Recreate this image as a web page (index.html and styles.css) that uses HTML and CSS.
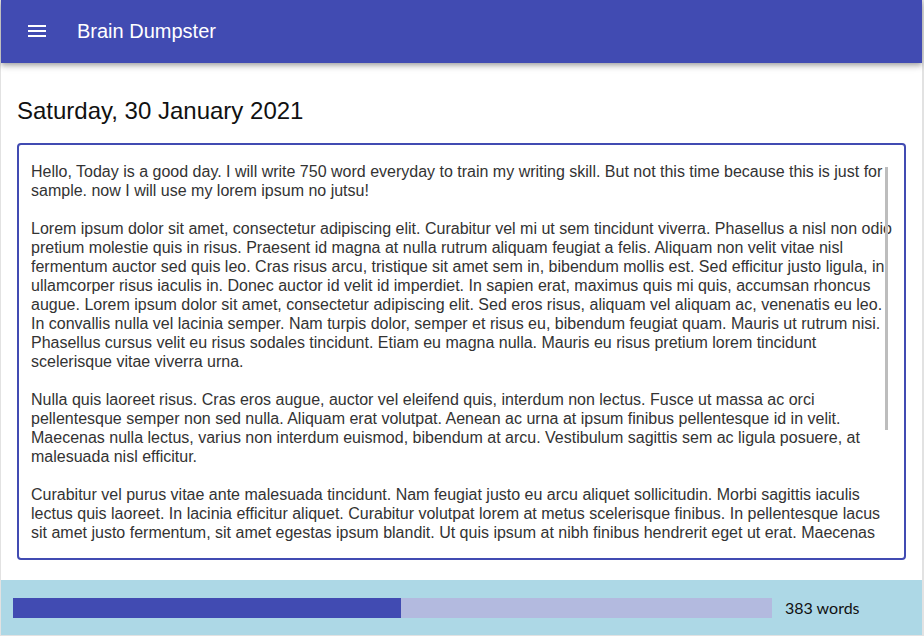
FILE: index.html
```html
<!DOCTYPE html>
<html lang="en">
<head>
<meta charset="utf-8">
<title>Brain Dumpster</title>
<link rel="stylesheet" href="styles.css">
</head>
<body>
<div class="frame">
  <header class="appbar">
    <button class="menu-btn" aria-label="Menu">
      <svg viewBox="0 0 24 24" width="24" height="24"><path fill="#fff" d="M3 18h18v-2H3v2zm0-5h18v-2H3v2zm0-7v2h18V6H3z"/></svg>
    </button>
    <div class="title">Brain Dumpster</div>
  </header>
  <main class="main">
    <h1 class="date">Saturday, 30 January 2021</h1>
    <div class="editor">
      <textarea class="editor-text" spellcheck="false">Hello, Today is a good day. I will write 750 word everyday to train my writing skill. But not this time because this is just for sample. now I will use my lorem ipsum no jutsu!

Lorem ipsum dolor sit amet, consectetur adipiscing elit. Curabitur vel mi ut sem tincidunt viverra. Phasellus a nisl non odio pretium molestie quis in risus. Praesent id magna at nulla rutrum aliquam feugiat a felis. Aliquam non velit vitae nisl fermentum auctor sed quis leo. Cras risus arcu, tristique sit amet sem in, bibendum mollis est. Sed efficitur justo ligula, in ullamcorper risus iaculis in. Donec auctor id velit id imperdiet. In sapien erat, maximus quis mi quis, accumsan rhoncus augue. Lorem ipsum dolor sit amet, consectetur adipiscing elit. Sed eros risus, aliquam vel aliquam ac, venenatis eu leo. In convallis nulla vel lacinia semper. Nam turpis dolor, semper et risus eu, bibendum feugiat quam. Mauris ut rutrum nisi. Phasellus cursus velit eu risus sodales tincidunt. Etiam eu magna nulla. Mauris eu risus pretium lorem tincidunt scelerisque vitae viverra urna.

Nulla quis laoreet risus. Cras eros augue, auctor vel eleifend quis, interdum non lectus. Fusce ut massa ac orci pellentesque semper non sed nulla. Aliquam erat volutpat. Aenean ac urna at ipsum finibus pellentesque id in velit. Maecenas nulla lectus, varius non interdum euismod, bibendum at arcu. Vestibulum sagittis sem ac ligula posuere, at malesuada nisl efficitur.

Curabitur vel purus vitae ante malesuada tincidunt. Nam feugiat justo eu arcu aliquet sollicitudin. Morbi sagittis iaculis lectus quis laoreet. In lacinia efficitur aliquet. Curabitur volutpat lorem at metus scelerisque finibus. In pellentesque lacus sit amet justo fermentum, sit amet egestas ipsum blandit. Ut quis ipsum at nibh finibus hendrerit eget ut erat. Maecenas sed tortor at nisi tincidunt luctus. Integer vitae lorem non ante porta vulputate. Donec gravida, nunc a pulvinar vehicula, mauris mi congue risus, vitae dictum augue nibh eu dolor.

Vivamus in turpis a lectus pretium gravida. Sed at mi sit amet nibh rutrum bibendum. Fusce laoreet, lorem sed elementum iaculis, ipsum lacus fringilla massa, id dapibus nulla lorem non lorem.</textarea>
      <div class="scroll-thumb"></div>
    </div>
  </main>
  <footer class="statusbar">
    <div class="progress"><div class="progress-fill" style="width: 51.07%"></div></div>
    <div class="count">383 words</div>
  </footer>
</div>
</body>
</html>
```

FILE: styles.css
```css
* { box-sizing: border-box; }
html, body { margin: 0; padding: 0; height: 100%; }
body {
  font-family: "Liberation Sans", Arial, sans-serif;
  background: #fff;
  overflow: hidden;
}
.frame {
  height: 636px;
  display: flex;
  flex-direction: column;
  border-left: 1px solid #e2e2e2;
  border-right: 2px solid #e2e2e2;
  border-bottom: 1px solid #e2e2e2;
}
.appbar {
  position: relative;
  z-index: 2;
  height: 63px;
  flex: none;
  background: #414bb2;
  display: flex;
  align-items: center;
  padding-left: 24px;
  padding-bottom: 1px;
  box-shadow: 0 2px 4px -1px rgba(0,0,0,.2), 0 4px 5px 0 rgba(0,0,0,.14), 0 1px 10px 0 rgba(0,0,0,.12);
}
.menu-btn {
  border: 0;
  background: none;
  padding: 0;
  width: 24px;
  height: 24px;
  display: block;
  cursor: pointer;
}
.menu-btn svg { display: block; }
.title {
  margin-left: 28px;
  color: #fff;
  font-size: 20px;
  line-height: 24px;
}
.main {
  flex: 1;
  min-height: 0;
  display: flex;
  flex-direction: column;
  padding: 34px 16px 20px;
}
.date {
  margin: 0 0 18px;
  font-size: 24px;
  line-height: 28px;
  font-weight: normal;
  color: #111;
}
.editor {
  position: relative;
  flex: 1;
  min-height: 0;
  border: 2px solid #414bb2;
  border-radius: 4px;
  display: flex;
  padding: 17px 12px 15px;
}
.editor-text {
  flex: 1;
  border: 0;
  outline: none;
  resize: none;
  padding: 0;
  font-family: "Liberation Sans", Arial, sans-serif;
  font-size: 16px;
  line-height: 19px;
  color: #333;
  background: transparent;
  overflow: hidden;
  scrollbar-width: none;
}
.scroll-thumb {
  position: absolute;
  left: 866px;
  top: 22px;
  width: 3px;
  height: 263px;
  background: #bdbdbd;
}
.statusbar {
  flex: none;
  height: 55px;
  background: #add8e6;
  display: flex;
  align-items: center;
  padding-left: 12px;
}
.progress {
  flex: 1;
  height: 20px;
  background: #b3badf;
}
.progress-fill {
  height: 100%;
  background: #414bb2;
}
.count {
  width: 150px;
  padding-left: 13px;
  font-family: Lato, "Open Sans", sans-serif;
  font-size: 16px;
  color: #111;
}
```
